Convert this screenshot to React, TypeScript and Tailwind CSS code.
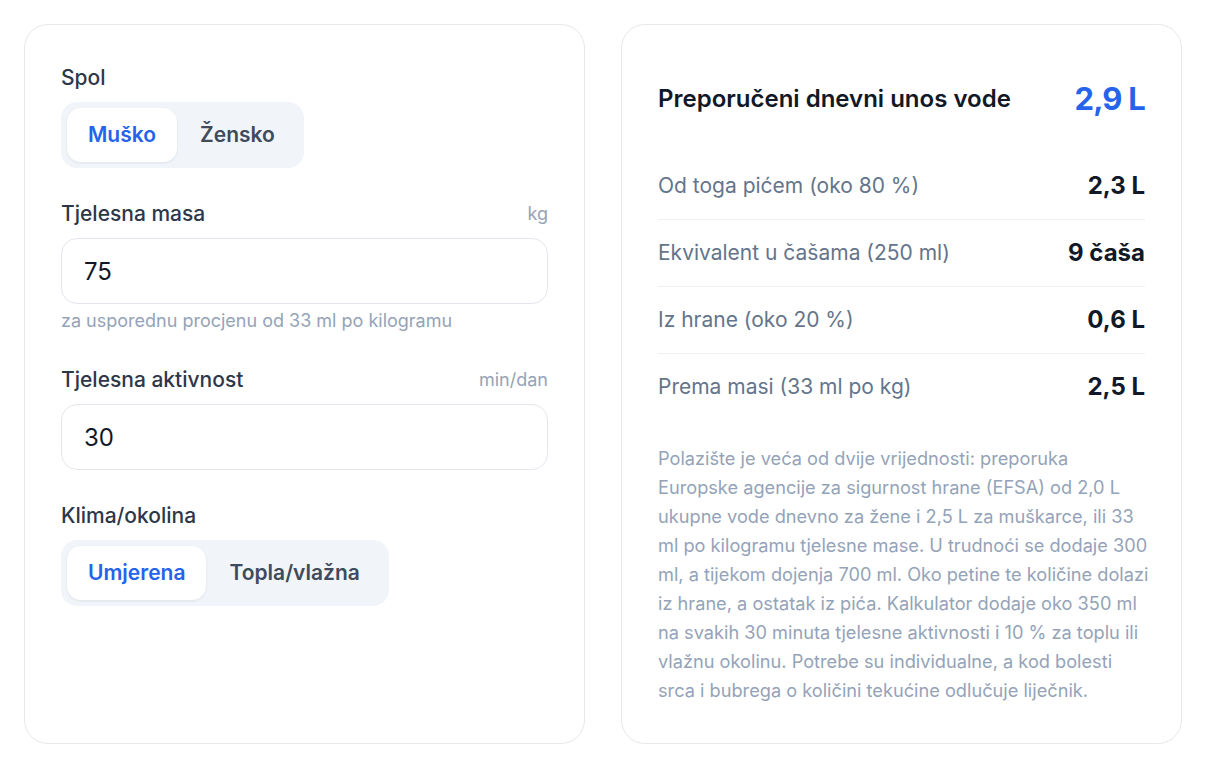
import { Fragment, useState } from "react";

type Option = { value: string; label: string };

const sexOptions: Option[] = [
  { value: "m", label: "Muško" },
  { value: "f", label: "Žensko" },
];

const climateOptions: Option[] = [
  { value: "moderate", label: "Umjerena" },
  { value: "hot", label: "Topla/vlažna" },
];

const Segmented = ({
  options,
  value,
  onChange,
}: {
  options: Option[];
  value: string;
  onChange: (v: string) => void;
}) => (
  <div className="inline-flex w-fit rounded-2xl bg-[#f1f4f8] p-1.5">
    {options.map((opt) => {
      const active = opt.value === value;
      return (
        <button
          key={opt.value}
          type="button"
          onClick={() => onChange(opt.value)}
          className={
            active
              ? "h-[54px] rounded-[14px] bg-white px-[21px] text-[21px] font-semibold text-[#2563eb] shadow-[0_1px_3px_rgba(15,23,42,0.08)]"
              : "h-[54px] rounded-[14px] px-[23px] text-[21px] font-semibold text-[#3f4a5c]"
          }
        >
          {opt.label}
        </button>
      );
    })}
  </div>
);

const FieldLabel = ({ label, unit }: { label: string; unit?: string }) => (
  <div className="mb-2 flex h-8 items-center justify-between">
    <span className="text-[21px] font-medium leading-8 text-[#2d3748]">{label}</span>
    {unit && <span className="text-lg text-[#94a3b8]">{unit}</span>}
  </div>
);

const NumberInput = ({ value, onChange }: { value: string; onChange: (v: string) => void }) => (
  <input
    value={value}
    onChange={(e) => onChange(e.target.value)}
    inputMode="numeric"
    className="h-[66px] w-full rounded-2xl border border-[#e3e7ed] bg-white px-[22px] text-[24px] text-[#111827] outline-none"
  />
);

const rows = [
  { label: "Od toga pićem (oko 80 %)", value: "2,3 L" },
  { label: "Ekvivalent u čašama (250 ml)", value: "9 čaša" },
  { label: "Iz hrane (oko 20 %)", value: "0,6 L" },
  { label: "Prema masi (33 ml po kg)", value: "2,5 L" },
];

// explanatory note, broken into its printed lines
const noteLines = [
  "Polazište je veća od dvije vrijednosti: preporuka",
  "Europske agencije za sigurnost hrane (EFSA) od 2,0 L",
  "ukupne vode dnevno za žene i 2,5 L za muškarce, ili 33",
  "ml po kilogramu tjelesne mase. U trudnoći se dodaje 300",
  "ml, a tijekom dojenja 700 ml. Oko petine te količine dolazi",
  "iz hrane, a ostatak iz pića. Kalkulator dodaje oko 350 ml",
  "na svakih 30 minuta tjelesne aktivnosti i 10 % za toplu ili",
  "vlažnu okolinu. Potrebe su individualne, a kod bolesti",
  "srca i bubrega o količini tekućine odlučuje liječnik.",
];

export default function App() {
  const [sex, setSex] = useState("m");
  const [mass, setMass] = useState("75");
  const [activity, setActivity] = useState("30");
  const [climate, setClimate] = useState("moderate");

  return (
    <div
      className="grid min-h-screen grid-cols-2 items-stretch gap-9 bg-white px-6 py-6"
      style={{ fontFamily: "Inter, 'Noto Sans', sans-serif" }}
    >
      <section className="flex flex-col gap-[30px] rounded-3xl border border-[#e6e8ec] px-9 pt-[37px] pb-9">
        <div className="flex flex-col">
          <FieldLabel label="Spol" />
          <Segmented options={sexOptions} value={sex} onChange={setSex} />
        </div>

        <div className="flex flex-col">
          <FieldLabel label="Tjelesna masa" unit="kg" />
          <NumberInput value={mass} onChange={setMass} />
          <p className="mt-1 text-lg leading-[26px] text-[#94a3b8]">
            za usporednu procjenu od 33 ml po kilogramu
          </p>
        </div>

        <div className="flex flex-col">
          <FieldLabel label="Tjelesna aktivnost" unit="min/dan" />
          <NumberInput value={activity} onChange={setActivity} />
        </div>

        <div className="flex flex-col">
          <FieldLabel label="Klima/okolina" />
          <Segmented options={climateOptions} value={climate} onChange={setClimate} />
        </div>
      </section>

      <section className="flex flex-col rounded-3xl border border-[#e6e8ec] p-9">
        <div className="flex items-center justify-between py-5">
          <h2 className="text-2xl font-semibold leading-9 text-[#111827]">
            Preporučeni dnevni unos vode
          </h2>
          <span className="text-[31px] font-bold leading-9 tracking-tight text-[#2563eb]">2,9 L</span>
        </div>

        <div className="mt-4 flex flex-col">
          {rows.map((row, i) => (
            <div
              key={row.label}
              className={
                i < rows.length - 1
                  ? "flex items-center justify-between border-b border-[#eef0f3] py-[19px]"
                  : "flex items-center justify-between py-[19px]"
              }
            >
              <span className="text-[21px] leading-7 text-[#64748b]">{row.label}</span>
              <span className="text-2xl font-bold leading-7 text-[#111827]">{row.value}</span>
            </div>
          ))}
        </div>

        <p className="mt-6 whitespace-nowrap text-[18.2px] leading-[29px] text-[#94a3b8]">
          {noteLines.map((line, i) => (
            <Fragment key={i}>
              {line}
              {i < noteLines.length - 1 && <br />}
            </Fragment>
          ))}
        </p>
      </section>
    </div>
  );
}
